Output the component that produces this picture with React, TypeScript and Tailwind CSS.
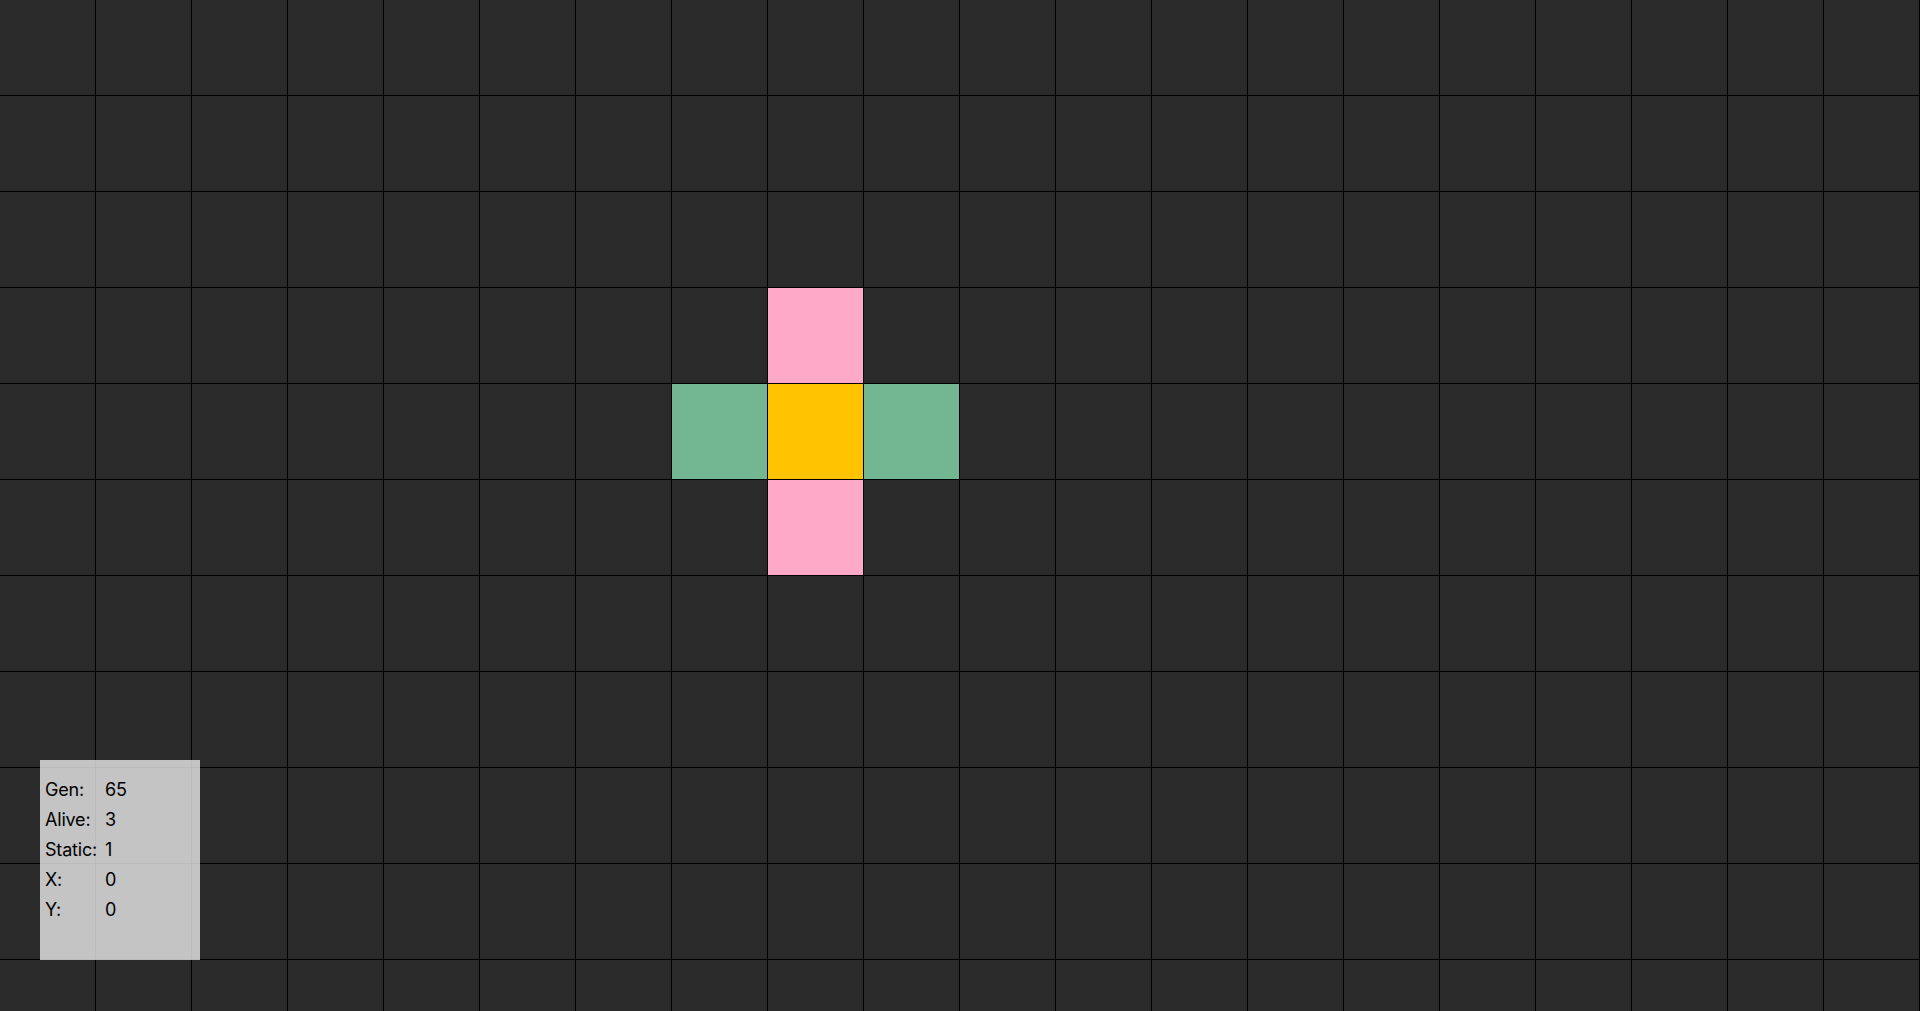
import React from 'react';

const COLS = 20;
const ROWS = 11;

// live cells keyed by "col,row"
const cells: Record<string, string> = {
  '8,3': 'bg-[#ffa9c9]',
  '7,4': 'bg-[#72b792]',
  '8,4': 'bg-[#ffc300]',
  '9,4': 'bg-[#72b792]',
  '8,5': 'bg-[#ffa9c9]',
};

const stats = [
  ['Gen:', '65'],
  ['Alive:', '3'],
  ['Static:', '1'],
  ['X:', '0'],
  ['Y:', '0'],
];

export default function App() {
  return (
    <div className="relative w-[1920px] h-[1011px] overflow-hidden bg-[#2a2a2a]">
      <div className="grid grid-cols-[repeat(20,96px)] auto-rows-[96px]">
        {Array.from({ length: COLS * ROWS }).map((_, i) => {
          const col = i % COLS;
          const row = Math.floor(i / COLS);
          const fill = cells[`${col},${row}`] ?? '';
          return <div key={i} className={`border-r border-b border-black ${fill}`} />;
        })}
      </div>

      {/* stats panel */}
      <div
        className="absolute left-[40px] top-[760px] w-[160px] h-[200px] bg-[#f5f5f5]/[0.76] pt-[15px] pl-[5px] text-black text-[18px] tracking-[-0.2px] leading-[30px]"
        style={{ fontFamily: 'Inter, "Noto Sans", sans-serif' }}
      >
        {stats.map(([label, value]) => (
          <div key={label} className="flex">
            <span className="w-[60px]">{label}</span>
            <span>{value}</span>
          </div>
        ))}
      </div>
    </div>
  );
}
